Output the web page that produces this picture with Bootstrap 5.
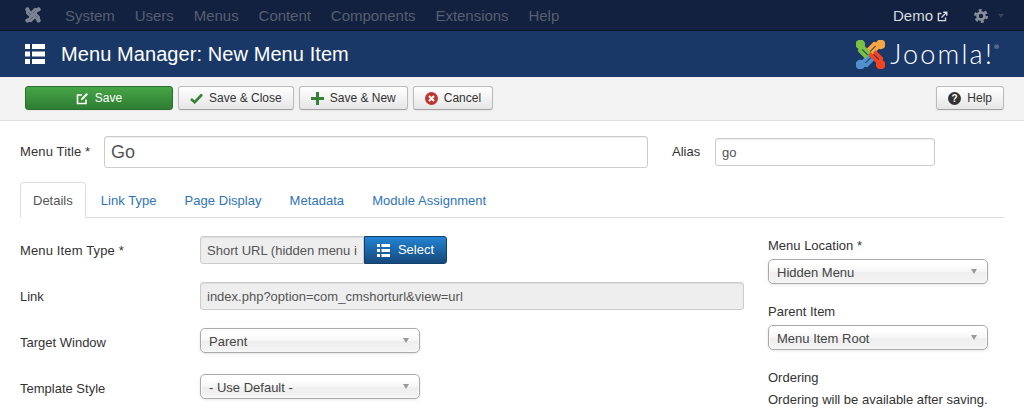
<!DOCTYPE html>
<html lang="en">
<head>
    <meta charset="UTF-8">
    <meta name="viewport" content="width=device-width, initial-scale=1.0">
    <title>Menu Manager: New Menu Item</title>
    <link href="https://cdn.jsdelivr.net/npm/bootstrap@5.3.2/dist/css/bootstrap.min.css" rel="stylesheet">
    <style>
        html, body { height: 418px; overflow: hidden; }
        body { font-family: "Liberation Sans", Arial, sans-serif; font-size: 13px; line-height: 18px; color: #333; background: #fff; }

        /* top bar */
        .top-bar { height: 31px; background: #11213f; border-bottom: 1px solid #0b1629; padding-left: 25px; padding-right: 20px; }
        .top-bar .nav-link { color: #575f6e; font-size: 15px; padding: 0; line-height: 32px; letter-spacing: -.04px; }
        .top-menu { gap: 20px; margin-left: 24px; }
        .top-user { color: #d7d9dd; font-size: 15px; line-height: 32px; }
        .gear-icon { margin-left: 26px; }
        .caret-down { width: 0; height: 0; border-left: 3.5px solid transparent; border-right: 3.5px solid transparent; border-top: 4px solid #3b4456; margin-left: 10px; }

        /* title */
        .title-bar { height: 46px; background: #1a3867; padding-left: 25px; padding-right: 25px; }
        .title-bar h1 { color: #fff; font-size: 20px; line-height: 24px; font-weight: 400; margin: 0 0 0 16px; letter-spacing: .08px; }
        .logo-word { font-family: "Lato", sans-serif; font-weight: 300; font-size: 27px; line-height: 30px; color: #fff; letter-spacing: 2.2px; margin-left: 5px; }
        .logo-word sup { font-size: 6px; top: -15px; letter-spacing: 0; }

        /* toolbar */
        .tool-bar { height: 44px; background: #f3f3f3; border-bottom: 1px solid #dedede; padding: 9px 20px 0 25px; gap: 5px; }
        .tool-btn { height: 24px; padding: 0 11px; font-size: 12px; line-height: 22px; color: #333; background: linear-gradient(#fff, #e6e6e6); border: 1px solid #bbb; border-bottom-color: #a2a2a2; border-radius: 3px; box-shadow: 0 1px 2px rgba(0,0,0,.05); gap: 6px; }
        .tool-btn.is-save { width: 148px; color: #fff; background: linear-gradient(#46a546, #2f7d32); border-color: #2c6e2f; justify-content: center; }

        /* form */
        .main-form { padding: 15px 20px 0; }
        .form-label-j { margin: 0; color: #333; font-size: 13px; line-height: 18px; }
        .form-label-j.is-wide { letter-spacing: .14px; }
        .field-j { height: 28px; min-height: 0; border: 1px solid #ccc; border-radius: 3px; padding: 4px 6px; font-size: 13px; line-height: 18px; color: #555; box-shadow: inset 0 1px 1px rgba(0,0,0,.075); background-color: #fff; }
        .field-j.is-title { width: 544px; height: 32px; font-size: 18px; }
        .field-j.is-alias { width: 220px; }
        .field-j.is-readonly { background-color: #eee; }
        .field-j.is-type { width: 164px; border-radius: 3px 0 0 3px; }
        .title-label { width: 84px; flex: none; }
        .alias-label { width: 43px; flex: none; margin-left: 24px; }

        .tabs-j { margin-top: 14px; border-bottom: 1px solid #ddd; height: 36px; }
        .tabs-j .nav-link { padding: 0 13px; line-height: 35px; height: 36px; font-size: 13px; letter-spacing: .04px; color: #2f74b5; border: 1px solid transparent; border-radius: 4px 4px 0 0; }
        .tabs-j .nav-link.active { color: #555; background: #fff; border-color: #ddd #ddd #fff; padding: 0 12px; margin-right: 1px; letter-spacing: 0; }

        .main-cols { padding-top: 18px; }
        .row-j { height: 46px; align-items: flex-start; }
        .col-label { width: 180px; flex: none; padding-top: 6px; }
        .select-j { width: 220px; height: 25px; border: 1px solid #aaa; border-radius: 5px; padding: 2px 8px 0; line-height: 21px; color: #444; background: linear-gradient(#fff 20%, #f6f6f6 50%, #eee 52%, #f4f4f4); box-shadow: 0 0 3px #fff inset, 0 1px 3px rgba(0,0,0,.1); }
        .select-arrow { width: 0; height: 0; border-left: 3.5px solid transparent; border-right: 3.5px solid transparent; border-top: 5px solid #999; margin-right: 2px; margin-top: -2px; }
        .select-btn { height: 28px; width: 83px; color: #fff; background: linear-gradient(#2384d3, #15497c); border: 1px solid #124069; border-radius: 0 3px 3px 0; gap: 8px; font-size: 13px; }
        .left-form { width: 724px; flex: none; }
        .side-form { margin-left: 24px; width: 220px; }
        .side-label { padding-top: 1px; margin-bottom: 4px; }
        .side-form .select-j { margin-bottom: 18px; }
    </style>
</head>
<body>
    <!-- top nav -->
    <nav class="top-bar d-flex align-items-start justify-content-between">
        <div class="d-flex align-items-start">
            <svg class="mt-1" width="16" height="22" viewBox="0 0 30 30" fill="none" stroke="#7d8492" stroke-width="4.5">
                <path d="M5 25L16 14M5 25L11 26L18 19"/><path d="M25 5L14 16M25 5L19 4L12 11"/><path d="M5 5L15 15M5 5L4 11L11 18"/><path d="M25 25L14 14M25 25L26 19L19 12"/>
                <g fill="#7d8492" stroke="none"><circle cx="4.5" cy="4.5" r="4"/><circle cx="25.5" cy="4.5" r="4"/><circle cx="4.5" cy="25.5" r="4"/><circle cx="25.5" cy="25.5" r="4"/></g>
            </svg>
            <ul class="nav top-menu">
                <li class="nav-item"><a class="nav-link" href="#">System</a></li>
                <li class="nav-item"><a class="nav-link" href="#">Users</a></li>
                <li class="nav-item"><a class="nav-link" href="#">Menus</a></li>
                <li class="nav-item"><a class="nav-link" href="#">Content</a></li>
                <li class="nav-item"><a class="nav-link" href="#">Components</a></li>
                <li class="nav-item"><a class="nav-link" href="#">Extensions</a></li>
                <li class="nav-item"><a class="nav-link" href="#">Help</a></li>
            </ul>
        </div>
        <div class="d-flex align-items-center top-user">
            <span>Demo</span>
            <svg class="ms-1" width="11" height="11" viewBox="0 0 11 11" fill="none" stroke="#d7d9dd" stroke-width="1.4"><path d="M8.5 6.5V9.6H1.4V2.5H4.5"/><path d="M4.5 6.5L9.5 1.5M6.2 1.2H9.8V4.8"/></svg>
            <svg class="gear-icon" width="14" height="14" viewBox="0 0 14 14" fill="none" stroke="#8b919c"><circle cx="7" cy="7" r="3.5" stroke-width="2.6"/><circle cx="7" cy="7" r="5.8" stroke-width="2.4" stroke-dasharray="3 3.07"/></svg>
            <span class="caret-down"></span>
        </div>
    </nav>

    <!-- title bar -->
    <header class="title-bar d-flex align-items-center justify-content-between">
        <div class="d-flex align-items-center">
            <svg width="20" height="20" viewBox="0 0 20 20" fill="#fff"><rect width="5" height="5"/><rect x="7" width="13" height="5"/><rect y="7.5" width="5" height="5"/><rect x="7" y="7.5" width="13" height="5"/><rect y="15" width="5" height="5"/><rect x="7" y="15" width="13" height="5"/></svg>
            <h1>Menu Manager: New Menu Item</h1>
        </div>
        <div class="d-flex align-items-center">
            <svg width="29" height="29" viewBox="0 0 30 30" fill="none" stroke-width="4">
                <g stroke="#5091cd" fill="#5091cd"><path d="M5 25L16 14M5 25L11 26L18 19" fill="none"/><circle cx="4.5" cy="25.5" r="3"/></g>
                <g stroke="#f9a541" fill="#f9a541"><path d="M25 5L14 16M25 5L19 4L12 11" fill="none"/><circle cx="25.5" cy="4.5" r="3"/></g>
                <g stroke="#7ac143" fill="#7ac143"><path d="M5 5L15 15M5 5L4 11L11 18" fill="none"/><circle cx="4.5" cy="4.5" r="3"/></g>
                <g stroke="#f44321" fill="#f44321"><path d="M25 25L14 14M25 25L26 19L19 12" fill="none"/><circle cx="25.5" cy="25.5" r="3"/></g>
            </svg>
            <span class="logo-word">Joomla!<sup>®</sup></span>
        </div>
    </header>

    <!-- toolbar -->
    <div class="tool-bar d-flex align-items-start">
        <button class="tool-btn is-save d-flex align-items-center" type="button">
            <svg width="13" height="13" viewBox="0 0 13 13" fill="none" stroke="#fff" stroke-width="1.6"><path d="M10 7.5V11.5H1.5V3H6"/><path d="M5 8.5L5.5 6L10.5 1L12 2.5L7 7.5Z" fill="#fff" stroke="none"/></svg>
            <span>Save</span>
        </button>
        <button class="tool-btn d-flex align-items-center" type="button">
            <svg width="13" height="11" viewBox="0 0 13 11" fill="none" stroke="#378137" stroke-width="2.6"><path d="M1 6L4.7 9.2L12 1.5"/></svg>
            <span>Save &amp; Close</span>
        </button>
        <button class="tool-btn d-flex align-items-center" type="button">
            <svg width="13" height="13" viewBox="0 0 13 13" fill="#378137"><path d="M5 0H8V5H13V8H8V13H5V8H0V5H5Z"/></svg>
            <span>Save &amp; New</span>
        </button>
        <button class="tool-btn d-flex align-items-center" type="button">
            <svg width="13" height="13" viewBox="0 0 13 13"><circle cx="6.5" cy="6.5" r="6.5" fill="#bd362f"/><path d="M4 4L9 9M9 4L4 9" stroke="#fff" stroke-width="2"/></svg>
            <span>Cancel</span>
        </button>
        <button class="tool-btn d-flex align-items-center ms-auto" type="button">
            <svg width="13" height="13" viewBox="0 0 13 13"><circle cx="6.5" cy="6.5" r="6.5" fill="#333"/><text x="6.5" y="10" text-anchor="middle" font-size="10" font-weight="700" fill="#fff" font-family="Liberation Sans">?</text></svg>
            <span>Help</span>
        </button>
    </div>

    <!-- form -->
    <form class="main-form">
        <div class="d-flex align-items-center">
            <label class="form-label-j is-wide title-label" for="jform_title">Menu Title *</label>
            <input class="form-control field-j is-title" id="jform_title" type="text" value="Go">
            <label class="form-label-j alias-label" for="jform_alias">Alias</label>
            <input class="form-control field-j is-alias" id="jform_alias" type="text" value="go">
        </div>

        <ul class="nav tabs-j">
            <li class="nav-item"><a class="nav-link active" href="#">Details</a></li>
            <li class="nav-item"><a class="nav-link" href="#">Link Type</a></li>
            <li class="nav-item"><a class="nav-link" href="#">Page Display</a></li>
            <li class="nav-item"><a class="nav-link" href="#">Metadata</a></li>
            <li class="nav-item"><a class="nav-link" href="#">Module Assignment</a></li>
        </ul>

        <div class="d-flex main-cols">
            <div class="left-form">
                <div class="d-flex row-j">
                    <label class="form-label-j is-wide col-label">Menu Item Type *</label>
                    <div class="d-flex">
                        <input class="form-control field-j is-readonly is-type" type="text" readonly value="Short URL (hidden menu item)">
                        <button class="select-btn d-flex align-items-center justify-content-center" type="button">
                            <svg width="13" height="13" viewBox="0 0 13 13" fill="#fff"><rect width="3" height="3"/><rect x="4.5" width="8.5" height="3"/><rect y="5" width="3" height="3"/><rect x="4.5" y="5" width="8.5" height="3"/><rect y="10" width="3" height="3"/><rect x="4.5" y="10" width="8.5" height="3"/></svg>
                            <span>Select</span>
                        </button>
                    </div>
                </div>
                <div class="d-flex row-j">
                    <label class="form-label-j col-label">Link</label>
                    <input class="form-control field-j is-readonly flex-grow-1 w-auto" type="text" readonly value="index.php?option=com_cmshorturl&amp;view=url">
                </div>
                <div class="d-flex row-j">
                    <label class="form-label-j col-label">Target Window</label>
                    <div class="select-j d-flex align-items-center justify-content-between"><span>Parent</span><span class="select-arrow"></span></div>
                </div>
                <div class="d-flex row-j">
                    <label class="form-label-j col-label">Template Style</label>
                    <div class="select-j d-flex align-items-center justify-content-between"><span>- Use Default -</span><span class="select-arrow"></span></div>
                </div>
            </div>
            <aside class="side-form">
                <label class="form-label-j d-block side-label">Menu Location *</label>
                <div class="select-j d-flex align-items-center justify-content-between"><span>Hidden Menu</span><span class="select-arrow"></span></div>
                <label class="form-label-j d-block side-label">Parent Item</label>
                <div class="select-j d-flex align-items-center justify-content-between"><span>Menu Item Root</span><span class="select-arrow"></span></div>
                <label class="form-label-j d-block side-label">Ordering</label>
                <div class="text-nowrap">Ordering will be available after saving.</div>
            </aside>
        </div>
    </form>
    <script src="https://cdn.jsdelivr.net/npm/bootstrap@5.3.2/dist/js/bootstrap.bundle.min.js"></script>
</body>
</html>
